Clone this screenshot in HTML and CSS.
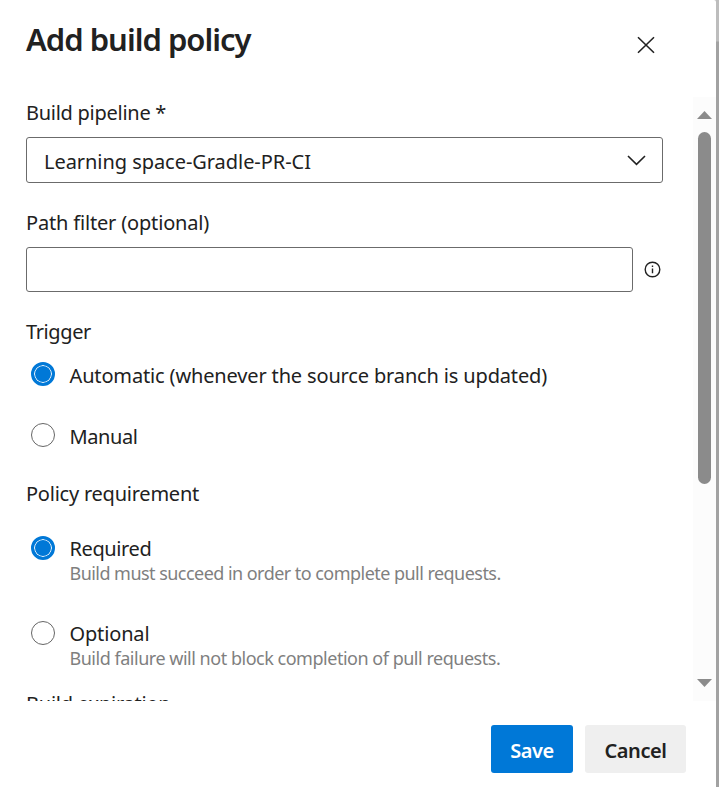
FILE: index.html
```html
<!DOCTYPE html>
<html lang="en">
<head>
<meta charset="utf-8">
<title>Add build policy</title>
<link rel="stylesheet" href="styles.css">
</head>
<body>
<div class="panel">
  <header class="header">
    <h1 class="title">Add build policy</h1>
    <button class="close" aria-label="Close">
      <svg width="18" height="18" viewBox="0 0 18 18"><path d="M1 1.2 17 16.8M17 1.2 1 16.8"/></svg>
    </button>
  </header>
  <div class="body">
    <main class="form">
      <div class="label pipeline">Build pipeline *</div>
      <div class="select">
        <span class="value">Learning space-Gradle-PR-CI</span>
        <svg width="19" height="11" viewBox="0 0 19 11"><path d="M1 1 9.5 9.3 18 1"/></svg>
      </div>
      <div class="label path">Path filter (optional)</div>
      <div class="filter">
        <input class="input" type="text" aria-label="Path filter">
        <svg class="info" width="17" height="17" viewBox="0 0 17 17"><circle cx="8.5" cy="8.5" r="7.3"/><path d="M8.5 7.5v4.7M8.5 4.6v1.4"/></svg>
      </div>
      <div class="label trigger">Trigger</div>
      <div class="option automatic"><span class="radio checked"></span><span class="name">Automatic (whenever the source branch is updated)</span></div>
      <div class="option manual"><span class="radio"></span><span class="name">Manual</span></div>
      <div class="label policy">Policy requirement</div>
      <div class="option detailed required"><span class="radio checked"></span>
        <div><div class="name">Required</div><div class="desc">Build must succeed in order to complete pull requests.</div></div>
      </div>
      <div class="option detailed optional"><span class="radio"></span>
        <div><div class="name">Optional</div><div class="desc failure">Build failure will not block completion of pull requests.</div></div>
      </div>
      <div class="label expiration">Build expiration</div>
    </main>
    <div class="scrollbar">
      <svg class="arrow" width="15" height="8" viewBox="0 0 15 8"><path d="M0 8 7.5 0 15 8z"/></svg>
      <div class="thumb"></div>
      <svg class="arrow" width="15" height="8" viewBox="0 0 15 8"><path d="M0 0h15L7.5 8z"/></svg>
    </div>
  </div>
  <footer class="footer">
    <button class="button save">Save</button>
    <button class="button cancel">Cancel</button>
  </footer>
</div>
</body>
</html>
```
FILE: styles.css
```css
* { box-sizing: border-box; }
body {
  margin: 0;
  height: 787px;
  overflow: hidden;
  background: linear-gradient(#bdbdbd, #bdbdbd 41px, #a2a2a2 42px, #a2a2a2);
  font-family: "Noto Sans", "Open Sans", sans-serif;
  font-size: 20px;
  line-height: 28px;
  color: #212121;
  white-space: nowrap;
}
button { border: 0; padding: 0; font: inherit; }
svg { display: block; flex: none; fill: none; stroke: #212121; stroke-width: 1.6; }
.panel { width: 716px; height: 787px; background: #fff; display: flex; flex-direction: column; border-top-right-radius: 2px; }
.header { height: 97px; padding: 17px 61px 0 26px; display: flex; justify-content: space-between; align-items: flex-start; }
.title { margin: 0; font-size: 31px; line-height: 44px; font-weight: 600; letter-spacing: -1px; }
.close { background: none; margin-top: 19px; }
.body { height: 604px; display: flex; overflow: hidden; }
.form { width: 693px; padding: 1px 0 0 26px; }
.label, .name, .value { display: block; padding-top: 2px; line-height: 26px; letter-spacing: -0.4px; }
.select { width: 637px; height: 46px; margin-top: 11px; padding: 0 16px 0 17px; border: 1px solid #6b6b6b; border-radius: 3px; display: flex; align-items: center; justify-content: space-between; }
.value { padding-top: 4px; letter-spacing: -0.05px; }
.label.pipeline { letter-spacing: -0.27px; }
.label.path { letter-spacing: -0.17px; }
.label.policy { letter-spacing: -0.23px; }
.label.expiration { letter-spacing: -0.22px; }
.automatic .name { letter-spacing: -0.15px; }
.optional .name { letter-spacing: -0.15px; }
.path, .trigger { margin-top: 25px; }
.filter { margin-top: 11px; display: flex; align-items: center; gap: 11px; }
.info { stroke-width: 1.4; }
.input { width: 607px; height: 45px; border: 1px solid #6b6b6b; border-radius: 3px; background: #fff; outline: 0; }
.option { display: flex; align-items: flex-start; padding-left: 5px; gap: 14.5px; }
.radio { flex: none; width: 24px; height: 24px; margin-top: 1px; border: 1px solid #666; border-radius: 50%; }
.radio.checked { border: 3px solid #0078d7; background: #0078d7; box-shadow: inset 0 0 0 1px #fff; }
.detailed .radio { margin-top: 2px; }
.automatic { margin-top: 16px; }
.manual { margin-top: 33px; }
.policy { margin-top: 29px; }
.required { margin-top: 27px; }
.optional { margin-top: 35px; }
.desc { font-size: 18px; line-height: 22px; color: #7f7f7f; letter-spacing: -0.54px; }
.desc.failure { letter-spacing: -0.48px; }
.expiration { margin-top: 20px; }
.scrollbar { width: 23px; background: #fcfcfc; padding: 14px 0 14px; display: flex; flex-direction: column; align-items: center; }
.arrow { fill: #8b8b8b; stroke: none; }
.thumb { width: 13px; height: 352px; margin: 13px 0 auto; border-radius: 7px; background: #8b8b8b; }
.footer { padding: 24px 30px 0 0; display: flex; justify-content: flex-end; gap: 12px; }
.button { height: 48px; padding-top: 4px; border-radius: 3px; font-weight: 600; letter-spacing: -0.4px; }
.save { width: 82px; background: #0078d7; color: #fff; }
.cancel { width: 101px; background: #efefef; color: #212121; }
```
